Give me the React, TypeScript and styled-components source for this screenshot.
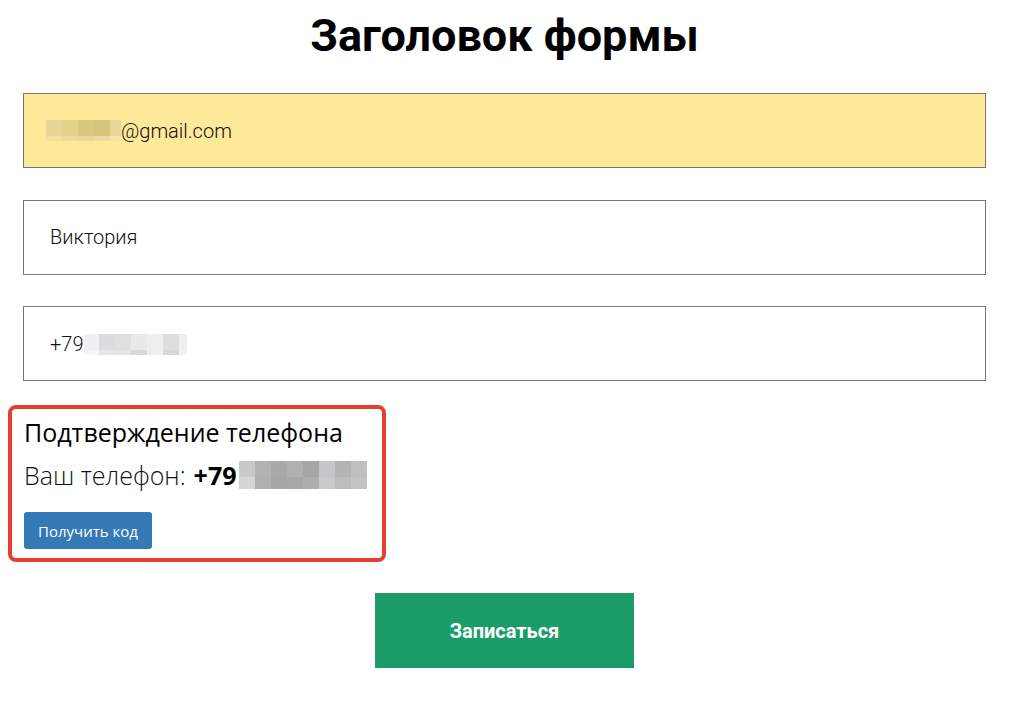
import React from 'react';
import styled, { createGlobalStyle } from 'styled-components';

const GlobalStyle = createGlobalStyle`
  html, body {
    margin: 0;
    padding: 0;
    background: #fff;
  }
  * {
    box-sizing: border-box;
  }
`;

const Page = styled.div`
  width: 963px;
  margin-left: 23px;
  padding-bottom: 36px;
  font-family: Roboto, 'Noto Sans', sans-serif;
`;

const Title = styled.h1`
  margin: 0;
  padding-top: 9px;
  height: 93px;
  text-align: center;
  font-family: Roboto, sans-serif;
  font-weight: 700;
  font-size: 45px;
  line-height: 53px;
  color: #000;
`;

const Fields = styled.div`
  display: flex;
  flex-direction: column;
  gap: 31.5px;
`;

const Field = styled.div<{ filled?: boolean }>`
  display: flex;
  align-items: center;
  height: 75px;
  padding: 0 26px;
  border: 1px solid #767676;
  background: ${({ filled }) => (filled ? '#fee999' : '#fff')};
  font-family: Roboto, sans-serif;
  font-weight: 300;
  font-size: 20px;
  color: #111;
`;

const Mosaic = styled.span<{ cols: string; top: number; bottom: number; pull?: number }>`
  display: inline-grid;
  grid-template-columns: ${({ cols }) => cols};
  grid-template-rows: ${({ top }) => top}px ${({ bottom }) => bottom}px;
  margin-left: ${({ pull }) => (pull ? -pull : 0)}px;
  vertical-align: middle;
`;

const Cell = styled.span<{ c: string }>`
  background: ${({ c }) => c};
`;

const Pixelated: React.FC<{
  cols: string;
  top: number;
  bottom: number;
  rows: [string[], string[]];
  pull?: number;
  shift?: number;
}> = ({ cols, top, bottom, rows, pull, shift = 0 }) => (
  <Mosaic
    cols={cols}
    top={top}
    bottom={bottom}
    pull={pull}
    style={{ position: 'relative', top: shift }}
  >
    {rows[0].map((c, i) => (
      <Cell key={`t${i}`} c={c} />
    ))}
    {rows[1].map((c, i) => (
      <Cell key={`b${i}`} c={c} />
    ))}
  </Mosaic>
);

const ConfirmBox = styled.div`
  margin: 24px 0 0 -15px;
  width: 378px;
  padding: 6px 12px 9px 12px;
  border: 4px solid #e63d33;
  border-radius: 8px;
  font-family: 'Open Sans', sans-serif;
`;

const ConfirmTitle = styled.div`
  font-size: 25px;
  line-height: 34px;
  color: #000;
`;

const PhoneLine = styled.div`
  margin-top: 9px;
  display: flex;
  align-items: center;
  font-size: 25px;
  line-height: 34px;
  font-weight: 300;
  color: #111;

  b {
    font-weight: 700;
    margin-left: 8px;
    margin-right: 3px;
    color: #000;
  }
`;

const SmallButton = styled.button`
  margin-top: 20px;
  display: block;
  height: 37px;
  width: 128px;
  padding: 0;
  border: none;
  border-radius: 3px;
  background: #337ab7;
  color: #fff;
  font-family: 'Open Sans', sans-serif;
  font-size: 15px;
`;

const SubmitRow = styled.div`
  display: flex;
  justify-content: center;
  margin-top: 31px;
`;

const SubmitButton = styled.button`
  width: 259px;
  height: 75px;
  border: none;
  background: #1b9c69;
  color: #fff;
  font-family: Roboto, sans-serif;
  font-weight: 700;
  font-size: 20px;
`;

const App: React.FC = () => (
  <>
    <GlobalStyle />
    <Page>
      <Title>Заголовок формы</Title>
      <Fields>
        <Field filled>
          <Pixelated
            cols="16px 16px 16px 16px 11px"
            top={16}
            bottom={5}
            pull={4}
            rows={[
              ['#e8d595', '#e2d28a', '#d8c97c', '#d6c47c', '#e6d69a'],
              ['#f2e2a2', '#ecdc9c', '#e8d89a', '#eadb9e', '#f4e4a6'],
            ]}
          />
          <span>@gmail.com</span>
        </Field>
        <Field>Виктория</Field>
        <Field>
          <span>+79</span>
          <Pixelated
            cols="15px 16px 16px 16px 16px 16px 8px"
            top={16}
            bottom={5}
            shift={1}
            rows={[
              ['#eff0f2', '#dcdcde', '#e0dfe0', '#e9e9e9', '#eeeeea', '#dedede', '#eeeff0'],
              ['#f5f6f8', '#e6e6e8', '#e6e5e6', '#d9d8d8', '#eeeeec', '#d8d8d8', '#f2f2f4'],
            ]}
          />
        </Field>
      </Fields>
      <ConfirmBox>
        <ConfirmTitle>Подтверждение телефона</ConfirmTitle>
        <PhoneLine>
          Ваш телефон: <b>+79</b>
          <Pixelated
            cols="16px 16px 16px 16px 16px 16px 16px 16px"
            top={16}
            bottom={12}
            rows={[
              ['#c9c9c9', '#b2b2b2', '#a9a9a9', '#b0b0b0', '#a6a6a6', '#c6c6c8', '#b4b4b2', '#bfbfbf'],
              ['#d6d6d8', '#b0b0b0', '#a6a6a6', '#a8a8a8', '#aeaeae', '#c8cacc', '#bcbcbc', '#c4c4c4'],
            ]}
          />
        </PhoneLine>
        <SmallButton>Получить код</SmallButton>
      </ConfirmBox>
      <SubmitRow>
        <SubmitButton>Записаться</SubmitButton>
      </SubmitRow>
    </Page>
  </>
);

export default App;
